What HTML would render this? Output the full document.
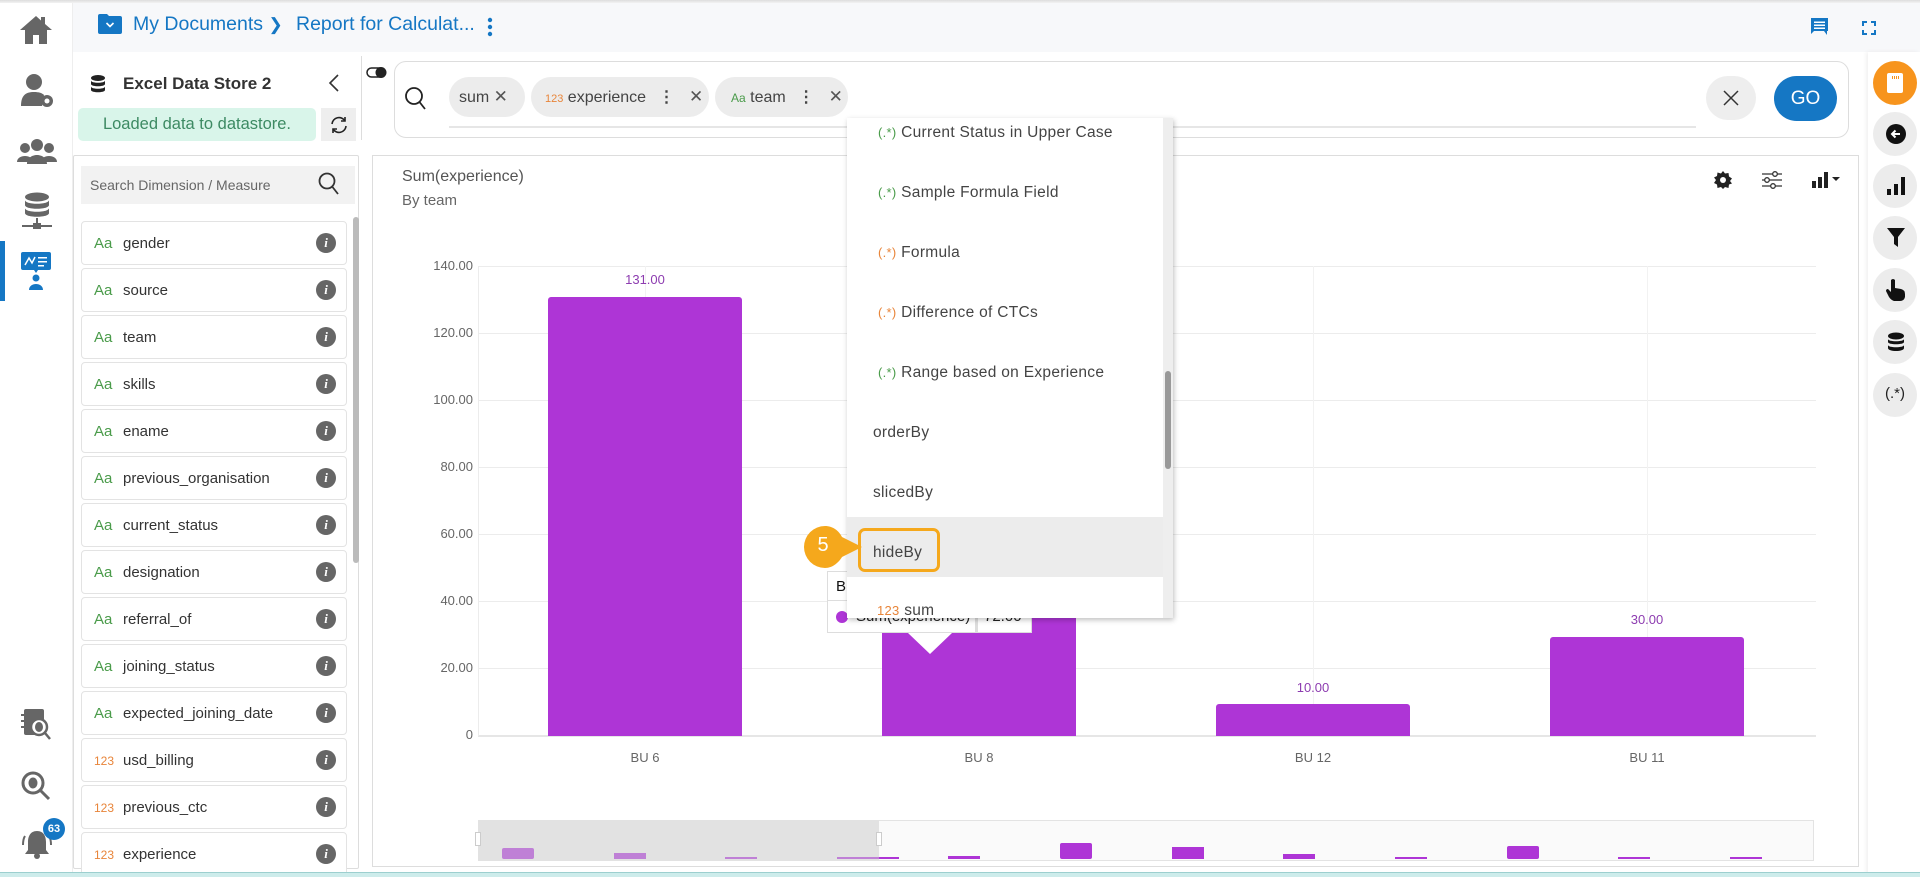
<!DOCTYPE html>
<html><head><meta charset="utf-8"><style>
*{box-sizing:border-box;margin:0;padding:0}
body{width:1920px;height:877px;overflow:hidden;background:#fff;font-family:"Liberation Sans",sans-serif;position:relative;color:#333}
.a{position:absolute}
.item{position:absolute;left:81px;width:266px;height:44px;border:1px solid #e3e3e3;border-radius:4px;background:#fff;font-size:15px;color:#333}
.item .t{position:absolute;left:12px;top:13px;font-size:15px;color:#4a9b4a}
.item .t.n{color:#e8853a;font-size:12px;top:15px}
.item .l{position:absolute;left:41px;top:13px}
.item .i{position:absolute;right:10px;top:11px;width:20px;height:20px;border-radius:50%;background:#666;color:#fff;font:italic bold 13px "Liberation Serif",serif;text-align:center;line-height:20px}
.chip{position:absolute;top:77px;height:40px;border-radius:20px;background:#ececec;font-size:16px;color:#444;line-height:40px}
.rc{position:absolute;left:1873px;width:44px;height:44px;border-radius:50%;background:#ececec}
.dd{position:absolute;left:0;font-size:15.5px;color:#444;letter-spacing:.3px}
.ylab{position:absolute;right:1447px;font-size:13px;color:#666;text-align:right}
.grid{position:absolute;left:478px;width:1338px;height:1px;background:#ececec}
.bar{position:absolute;width:194px;background:#ae35d6;border-radius:3px 3px 0 0}
.vl{position:absolute;font-size:13px;color:#8d3cb0;width:194px;text-align:center}
.xl{position:absolute;top:750px;font-size:13px;color:#666;width:194px;text-align:center}
</style></head><body>

<!-- left rail -->
<div class="a" style="left:0;top:0;width:73px;height:877px;background:#fff;border-right:1px solid #eee"></div>
<svg class="a" style="left:18px;top:14px" width="36" height="32" viewBox="0 0 36 32"><path d="M18 2 L2 16 H7 V30 H15 V21 H21 V30 H29 V16 H34 L27 10 V3 H23 V6.5 Z" fill="#666"/></svg>
<svg class="a" style="left:20px;top:73px" width="34" height="36" viewBox="0 0 34 36"><circle cx="14" cy="9" r="8" fill="#666"/><path d="M1 33 C1 22 6 19 14 19 C19 19 22 20 24 22 L22 33Z" fill="#666"/><circle cx="27" cy="28" r="6" fill="#666"/><circle cx="27" cy="28" r="2.5" fill="#fff"/></svg>
<svg class="a" style="left:17px;top:138px" width="40" height="28" viewBox="0 0 40 28"><circle cx="20" cy="7" r="6" fill="#666"/><circle cx="8" cy="10" r="5" fill="#666"/><circle cx="32" cy="10" r="5" fill="#666"/><path d="M0 24 C0 16 16 16 16 24Z M24 24 C24 16 40 16 40 24Z M10 26 C10 14 30 14 30 26Z" fill="#666"/></svg>
<svg class="a" style="left:20px;top:192px" width="34" height="40" viewBox="0 0 34 40"><ellipse cx="17" cy="5" rx="12" ry="4.5" fill="#666"/><path d="M5 8 C5 13 29 13 29 8 V13 C29 18 5 18 5 13Z M5 16 C5 21 29 21 29 16 V21 C29 26 5 26 5 21Z" fill="#666"/><rect x="16" y="26" width="2" height="8" fill="#666"/><rect x="2" y="33" width="30" height="2" fill="#666"/><rect x="13" y="31" width="8" height="6" fill="#666"/></svg>
<div class="a" style="left:0;top:241px;width:5px;height:60px;background:#1577c4"></div>
<svg class="a" style="left:21px;top:252px" width="30" height="40" viewBox="0 0 30 40"><rect x="0" y="0" width="30" height="18" rx="2" fill="#1577c4"/><path d="M13 18 L15 21 L17 18Z" fill="#1577c4"/><path d="M4 13 L8 6 L11 11 L14 5" stroke="#fff" stroke-width="1.5" fill="none"/><rect x="17" y="5" width="9" height="1.5" fill="#fff"/><rect x="17" y="9" width="9" height="1.5" fill="#fff"/><rect x="17" y="13" width="6" height="1.5" fill="#fff"/><circle cx="15" cy="26" r="3.5" fill="#1577c4"/><path d="M8 38 C8 30 22 30 22 38Z" fill="#1577c4"/></svg>
<svg class="a" style="left:20px;top:708px" width="32" height="34" viewBox="0 0 32 34"><rect x="4" y="1" width="20" height="26" rx="2" fill="#666"/><rect x="1" y="6" width="5" height="2" fill="#666"/><rect x="1" y="12" width="5" height="2" fill="#666"/><rect x="1" y="18" width="5" height="2" fill="#666"/><circle cx="19" cy="19" r="8" fill="#fff" stroke="#666" stroke-width="2.5"/><ellipse cx="19" cy="19" rx="4" ry="5" fill="#666"/><path d="M25 25 L30 31" stroke="#666" stroke-width="2.5"/></svg>
<svg class="a" style="left:20px;top:770px" width="32" height="32" viewBox="0 0 32 32"><circle cx="13" cy="13" r="10" fill="#fff" stroke="#666" stroke-width="3"/><ellipse cx="13" cy="13" rx="4.5" ry="5.5" fill="#666"/><path d="M20 20 L29 29" stroke="#666" stroke-width="3"/></svg>
<svg class="a" style="left:20px;top:828px" width="34" height="32" viewBox="0 0 34 32"><path d="M17 3 C10 3 8 9 8 14 V22 L5 26 H29 L26 22 V14 C26 9 24 3 17 3Z" fill="#666"/><circle cx="17" cy="28" r="3" fill="#666"/><path d="M5 8 C3 11 3 14 3 17 M29 8 C31 11 31 14 31 17" stroke="#666" stroke-width="2" fill="none"/></svg>
<div class="a" style="left:43px;top:818px;width:22px;height:22px;border-radius:50%;background:#1577c4;color:#fff;font-size:11px;text-align:center;line-height:22px;font-weight:bold">63</div>

<!-- top bar -->
<div class="a" style="left:73px;top:0;width:1847px;height:52px;background:#f7f8fa"></div>
<div class="a" style="left:0;top:0;width:1920px;height:3px;background:linear-gradient(#ddd,#f3f3f3)"></div>
<svg class="a" style="left:98px;top:14px" width="24" height="20" viewBox="0 0 24 20"><path d="M0 2 Q0 0 2 0 H9 L11 2 H22 Q24 2 24 4 V18 Q24 20 22 20 H2 Q0 20 0 18Z" fill="#1577c4"/><path d="M8.5 9 L12 12.5 L15.5 9" stroke="#fff" stroke-width="1.6" fill="none"/></svg>
<div class="a" style="left:133px;top:13px;font-size:19.5px;color:#1577c4">My Documents <span style="font-size:17px">&#10095;</span></div>
<div class="a" style="left:296px;top:13px;font-size:19.5px;color:#1577c4">Report for Calculat...</div>
<svg class="a" style="left:486px;top:16px" width="8" height="22"><circle cx="4" cy="4" r="2.2" fill="#1577c4"/><circle cx="4" cy="11" r="2.2" fill="#1577c4"/><circle cx="4" cy="18" r="2.2" fill="#1577c4"/></svg>
<svg class="a" style="left:1810px;top:17px" width="20" height="20" viewBox="0 0 20 20"><path d="M1 1 H18 V14 H4 L1 17Z M17 14 V18 L14 14" fill="#1577c4"/><rect x="4" y="4.5" width="11" height="1.5" fill="#fff"/><rect x="4" y="7.5" width="11" height="1.5" fill="#fff"/><rect x="4" y="10.5" width="11" height="1.5" fill="#fff"/></svg>
<svg class="a" style="left:1862px;top:21px" width="14" height="14" viewBox="0 0 14 14" fill="none" stroke="#1577c4" stroke-width="2"><path d="M1 5V1H5M9 1H13V5M13 9V13H9M5 13H1V9"/></svg>

<!-- left data panel -->
<svg class="a" style="left:90px;top:75px" width="16" height="20" viewBox="0 0 16 20"><ellipse cx="8" cy="3" rx="7" ry="3" fill="#222"/><path d="M1 5.5C1 8.5 15 8.5 15 5.5V9C15 12 1 12 1 9Z M1 11.5C1 14.5 15 14.5 15 11.5V15C15 18 1 18 1 15Z" fill="#222"/></svg>
<div class="a" style="left:123px;top:74px;font-size:17px;font-weight:bold;color:#333">Excel Data Store 2</div>
<svg class="a" style="left:328px;top:73px" width="12" height="20"><path d="M10 2 L2 10 L10 18" stroke="#333" stroke-width="1.6" fill="none"/></svg>
<div class="a" style="left:78px;top:108px;width:238px;height:33px;background:#d9f5ea;border-radius:5px;color:#3d8a63;font-size:16.5px;text-align:center;line-height:33px">Loaded data to datastore.</div>
<div class="a" style="left:321px;top:108px;width:35px;height:33px;background:#eee"></div>
<svg class="a" style="left:329px;top:115px" width="20" height="20" viewBox="0 0 20 20" fill="none" stroke="#222" stroke-width="1.6"><path d="M3 9 A7 7 0 0 1 16 6 M17 11 A7 7 0 0 1 4 14"/><path d="M16 2 V6 H12 M4 18 V14 H8"/></svg>
<div class="a" style="left:361px;top:56px;width:1px;height:84px;background:#ddd"></div>
<svg class="a" style="left:366px;top:66px" width="22" height="13"><rect x="1" y="2" width="18" height="9" rx="4.5" fill="none" stroke="#222" stroke-width="1.5"/><circle cx="15" cy="6.5" r="5.5" fill="#222"/></svg>

<div class="a" style="left:73px;top:155px;width:286px;height:714px;border:1px solid #ddd;border-radius:2px;background:#fff"></div>
<div class="a" style="left:81px;top:166px;width:274px;height:38px;background:#f2f2f2"></div>
<div class="a" style="left:90px;top:177px;font-size:14px;color:#666">Search Dimension / Measure</div>
<svg class="a" style="left:318px;top:172px" width="22" height="24" viewBox="0 0 22 24" fill="none" stroke="#333" stroke-width="1.8"><circle cx="9" cy="9" r="7.5"/><path d="M14.5 15 L20 22"/></svg>
<div class="a" style="left:353px;top:217px;width:6px;height:346px;background:#bbb;border-radius:3px"></div>

<div class="item" style="top:221px"><span class="t">Aa</span><span class="l">gender</span><span class="i">i</span></div>
<div class="item" style="top:268px"><span class="t">Aa</span><span class="l">source</span><span class="i">i</span></div>
<div class="item" style="top:315px"><span class="t">Aa</span><span class="l">team</span><span class="i">i</span></div>
<div class="item" style="top:362px"><span class="t">Aa</span><span class="l">skills</span><span class="i">i</span></div>
<div class="item" style="top:409px"><span class="t">Aa</span><span class="l">ename</span><span class="i">i</span></div>
<div class="item" style="top:456px"><span class="t">Aa</span><span class="l">previous_organisation</span><span class="i">i</span></div>
<div class="item" style="top:503px"><span class="t">Aa</span><span class="l">current_status</span><span class="i">i</span></div>
<div class="item" style="top:550px"><span class="t">Aa</span><span class="l">designation</span><span class="i">i</span></div>
<div class="item" style="top:597px"><span class="t">Aa</span><span class="l">referral_of</span><span class="i">i</span></div>
<div class="item" style="top:644px"><span class="t">Aa</span><span class="l">joining_status</span><span class="i">i</span></div>
<div class="item" style="top:691px"><span class="t">Aa</span><span class="l">expected_joining_date</span><span class="i">i</span></div>
<div class="item" style="top:738px"><span class="t n">123</span><span class="l">usd_billing</span><span class="i">i</span></div>
<div class="item" style="top:785px"><span class="t n">123</span><span class="l">previous_ctc</span><span class="i">i</span></div>
<div class="item" style="top:832px"><span class="t n">123</span><span class="l">experience</span><span class="i">i</span></div>

<!-- search bar -->
<div class="a" style="left:394px;top:61px;width:1455px;height:77px;border:1px solid #ddd;border-radius:12px;background:#fff"></div>
<svg class="a" style="left:404px;top:86px" width="24" height="26" viewBox="0 0 24 26" fill="none" stroke="#222" stroke-width="1.8"><circle cx="10" cy="10" r="8"/><path d="M15.5 16 L21 23"/></svg>
<div class="chip" style="left:449px;width:76px;padding-left:10px">sum <span style="font-size:17px;color:#555">&#x2715;</span></div>
<div class="chip" style="left:531px;width:178px;padding-left:14px"><span style="color:#e8853a;font-size:11px">123</span> experience <b style="margin:0 10px 0 8px">&#8942;</b> <span style="font-size:17px;color:#555">&#x2715;</span></div>
<div class="chip" style="left:715px;width:133px;padding-left:16px"><span style="color:#4a9b4a;font-size:12px">Aa</span> team <b style="margin:0 10px 0 8px">&#8942;</b> <span style="font-size:17px;color:#555">&#x2715;</span></div>
<div class="a" style="left:449px;top:126px;width:1247px;height:2px;background:#e6e6e6"></div>
<div class="a" style="left:1706px;top:76px;width:50px;height:44px;border-radius:22px;background:#eee"></div>
<svg class="a" style="left:1721px;top:88px" width="20" height="20"><path d="M3 3L17 17M17 3L3 17" stroke="#333" stroke-width="1.5"/></svg>
<div class="a" style="left:1774px;top:76px;width:63px;height:45px;border-radius:23px;background:#1577c4;color:#fff;font-size:19px;text-align:center;line-height:45px">GO</div>

<!-- right rail -->
<div class="a" style="left:1868px;top:52px;width:52px;height:825px;background:#fff;box-shadow:-2px 0 4px rgba(0,0,0,.06)"></div>
<div class="rc" style="top:61px;background:#f7941d"></div>
<svg class="a" style="left:1885px;top:72px" width="20" height="22"><path d="M2 3Q2 1 4 1H16Q18 1 18 3V19Q18 21 16 21H4Q2 21 2 19Z" fill="#fff"/><rect x="7" y="4" width="1" height="3" fill="#f7941d"/><rect x="9" y="4" width="1" height="3" fill="#f7941d"/><rect x="11" y="4" width="1" height="3" fill="#f7941d"/><rect x="13" y="4" width="1" height="3" fill="#f7941d"/></svg>
<div class="rc" style="top:112px"></div>
<svg class="a" style="left:1885px;top:123px" width="22" height="22"><circle cx="11" cy="11" r="10" fill="#111"/><path d="M15 11H7M10.5 7.5L7 11L10.5 14.5" stroke="#fff" stroke-width="2" fill="none"/></svg>
<div class="rc" style="top:164px"></div>
<svg class="a" style="left:1886px;top:176px" width="20" height="20"><rect x="1" y="13" width="4" height="6" fill="#111"/><rect x="8" y="8" width="4" height="11" fill="#111"/><rect x="15" y="1" width="4" height="18" fill="#111"/></svg>
<div class="rc" style="top:216px"></div>
<svg class="a" style="left:1886px;top:227px" width="20" height="22"><path d="M1 1H19L12 10V20L8 17V10Z" fill="#111"/></svg>
<div class="rc" style="top:268px"></div>
<svg class="a" style="left:1885px;top:278px" width="22" height="24"><path d="M6 2Q8 0 10 2V10L16 11Q20 12 20 16V19Q19 23 15 23H9Q6 22 4 19L1 13Q1 11 3 11L6 14Z" fill="#111"/></svg>
<div class="rc" style="top:320px"></div>
<svg class="a" style="left:1886px;top:332px" width="20" height="22"><ellipse cx="10" cy="4" rx="8" ry="3.5" fill="#111"/><path d="M2 7C2 10 18 10 18 7V10C18 13 2 13 2 10Z M2 13C2 16 18 16 18 13V16C18 20 2 20 2 16Z" fill="#111"/></svg>
<div class="rc" style="top:373px"></div>
<div class="a" style="left:1873px;top:385px;width:44px;text-align:center;font-size:15px;color:#222">(.*)</div>

<!-- chart panel -->
<div class="a" style="left:372px;top:155px;width:1487px;height:712px;border:1px solid #ddd;background:#fff"></div>
<div class="a" style="left:402px;top:168px;font-size:16px;color:#555">Sum(experience)</div>
<div class="a" style="left:402px;top:192px;font-size:15px;color:#666">By team</div>
<svg class="a" style="left:1713px;top:170px" width="20" height="20" viewBox="0 0 20 20"><path d="M10 1L12 3.5L15.5 3L16 6.5L19 8.5L17 11L19 13.5L16 14.5L15.5 18L12 17L10 19L8 17L4.5 18L4 14.5L1 13L3 10L1 7.5L4 6L4.5 2.5L8 3.5Z" fill="#222"/><circle cx="10" cy="10" r="3" fill="#fff"/></svg>
<svg class="a" style="left:1761px;top:170px" width="22" height="20" stroke="#333" stroke-width="1.3" fill="#fff"><path d="M1 4H21M1 10H21M1 16H21"/><circle cx="14" cy="4" r="2.3"/><circle cx="6" cy="10" r="2.3"/><circle cx="12" cy="16" r="2.3"/></svg>
<svg class="a" style="left:1811px;top:171px" width="32" height="18"><rect x="1" y="10" width="4" height="7" fill="#222"/><rect x="7" y="6" width="4" height="11" fill="#222"/><rect x="13" y="1" width="4" height="16" fill="#222"/><path d="M21 6H29L25 10Z" fill="#222"/></svg>

<div class="grid" style="top:266px"></div><div class="grid" style="top:333px"></div><div class="grid" style="top:400px"></div><div class="grid" style="top:467px"></div><div class="grid" style="top:534px"></div><div class="grid" style="top:601px"></div><div class="grid" style="top:668px"></div><div class="grid" style="top:735px;height:2px;background:#e6e6e6"></div>
<div class="a" style="left:478px;top:266px;width:1px;height:470px;background:#ececec"></div>
<div class="a" style="left:645px;top:266px;width:1px;height:470px;background:#f2f2f2"></div>
<div class="a" style="left:979px;top:266px;width:1px;height:470px;background:#f2f2f2"></div>
<div class="a" style="left:1313px;top:266px;width:1px;height:470px;background:#f2f2f2"></div>
<div class="a" style="left:1647px;top:266px;width:1px;height:470px;background:#f2f2f2"></div>
<div class="ylab" style="top:258px">140.00</div><div class="ylab" style="top:325px">120.00</div><div class="ylab" style="top:392px">100.00</div><div class="ylab" style="top:459px">80.00</div><div class="ylab" style="top:526px">60.00</div><div class="ylab" style="top:593px">40.00</div><div class="ylab" style="top:660px">20.00</div><div class="ylab" style="top:727px">0</div>

<div class="bar" style="left:548px;top:297px;height:439px"></div>
<div class="bar" style="left:882px;top:494px;height:242px"></div>
<div class="bar" style="left:1216px;top:704px;height:32px"></div>
<div class="bar" style="left:1550px;top:637px;height:99px"></div>
<div class="vl" style="left:548px;top:272px">131.00</div>
<div class="vl" style="left:1216px;top:680px">10.00</div>
<div class="vl" style="left:1550px;top:612px">30.00</div>
<div class="xl" style="left:548px">BU 6</div><div class="xl" style="left:882px">BU 8</div><div class="xl" style="left:1216px">BU 12</div><div class="xl" style="left:1550px">BU 11</div>

<!-- navigator -->
<div class="a" style="left:478px;top:820px;width:1336px;height:41px;border:1px solid #e3e3e3;background:#fafafa"></div>
<div class="a" style="left:478px;top:820px;width:401px;height:41px;background:#e2e2e2"></div>
<div class="a" style="left:475px;top:832px;width:6px;height:14px;background:#fff;border:1px solid #ccc"></div>
<div class="a" style="left:876px;top:832px;width:6px;height:14px;background:#fff;border:1px solid #ccc"></div>
<div class="a" style="left:502px;top:848px;width:32px;height:11px;background:#bf80d6;border-radius:2px"></div>
<div class="a" style="left:614px;top:853px;width:32px;height:6px;background:#bf80d6"></div>
<div class="a" style="left:725px;top:857px;width:32px;height:2px;background:#bf80d6"></div>
<div class="a" style="left:837px;top:857px;width:42px;height:2px;background:#bf80d6"></div>
<div class="a" style="left:879px;top:857px;width:20px;height:2px;background:#ae35d6"></div>
<div class="a" style="left:948px;top:856px;width:32px;height:3px;background:#ae35d6"></div>
<div class="a" style="left:1060px;top:843px;width:32px;height:16px;background:#ae35d6;border-radius:2px"></div>
<div class="a" style="left:1172px;top:847px;width:32px;height:12px;background:#ae35d6"></div>
<div class="a" style="left:1283px;top:854px;width:32px;height:5px;background:#ae35d6"></div>
<div class="a" style="left:1395px;top:857px;width:32px;height:2px;background:#ae35d6"></div>
<div class="a" style="left:1507px;top:846px;width:32px;height:13px;background:#ae35d6;border-radius:2px"></div>
<div class="a" style="left:1618px;top:857px;width:32px;height:2px;background:#ae35d6"></div>
<div class="a" style="left:1730px;top:857px;width:32px;height:2px;background:#ae35d6"></div>

<!-- tooltip -->
<div class="a" style="left:827px;top:571px;width:205px;height:62px;background:#fff;border:1px solid #ddd"></div>
<div class="a" style="left:827px;top:600px;width:205px;height:1px;background:#ddd"></div>
<div class="a" style="left:975px;top:601px;width:3px;height:32px;background:#ddd"></div>
<div class="a" style="left:836px;top:578px;font-size:15px;color:#111">BU 8</div>
<div class="a" style="left:836px;top:611px;width:12px;height:12px;border-radius:50%;background:#ae35d6"></div>
<div class="a" style="left:856px;top:608px;font-size:15px;color:#222">Sum(experience)</div>
<div class="a" style="left:984px;top:608px;font-size:15px;color:#222">72.00</div>
<svg class="a" style="left:908px;top:633px" width="44" height="22"><path d="M0 0H44L22 21Z" fill="#fff"/></svg>

<!-- dropdown -->
<div class="a" style="left:847px;top:118px;width:326px;height:500px;background:#fff;box-shadow:1px 2px 5px rgba(0,0,0,.25)">
 <div class="a" style="left:316px;top:0;width:10px;height:500px;background:#eee"></div>
 <div class="a" style="left:318px;top:253px;width:6px;height:98px;background:#999;border-radius:3px"></div>
 <div class="a" style="left:0;top:399px;width:316px;height:60px;background:#ececec"></div>
 <div class="dd" style="left:31px;top:6px"><span style="color:#4a9b4a;font-size:13px">(.*)</span> Current Status in Upper Case</div>
 <div class="dd" style="left:31px;top:66px"><span style="color:#4a9b4a;font-size:13px">(.*)</span> Sample Formula Field</div>
 <div class="dd" style="left:31px;top:126px"><span style="color:#e8853a;font-size:13px">(.*)</span> Formula</div>
 <div class="dd" style="left:31px;top:186px"><span style="color:#e8853a;font-size:13px">(.*)</span> Difference of CTCs</div>
 <div class="dd" style="left:31px;top:246px"><span style="color:#4a9b4a;font-size:13px">(.*)</span> Range based on Experience</div>
 <div class="dd" style="left:26px;top:306px">orderBy</div>
 <div class="dd" style="left:26px;top:366px">slicedBy</div>
 <div class="dd" style="left:26px;top:426px">hideBy</div>
 <div class="dd" style="left:30px;top:484px"><span style="color:#e8853a;font-size:13px">123</span> sum</div>
 <div class="a" style="left:11px;top:410px;width:82px;height:44px;border:3px solid #f5a81c;border-radius:7px"></div>
</div>
<svg class="a" style="left:800px;top:525px" width="64" height="44"><path d="M25 1A21 21 0 1 0 25 43C33 43 39 37 42 32L62 22L42 12C39 6 33 1 25 1Z" fill="#f5a81c"/></svg>
<div class="a" style="left:808px;top:534px;width:30px;text-align:center;color:#fff;font-size:20px">5</div>

<!-- bottom strip -->
<div class="a" style="left:0;top:872px;width:1920px;height:5px;background:#cdeceb;border-top:1px solid #9ccfcf"></div>
</body></html>
